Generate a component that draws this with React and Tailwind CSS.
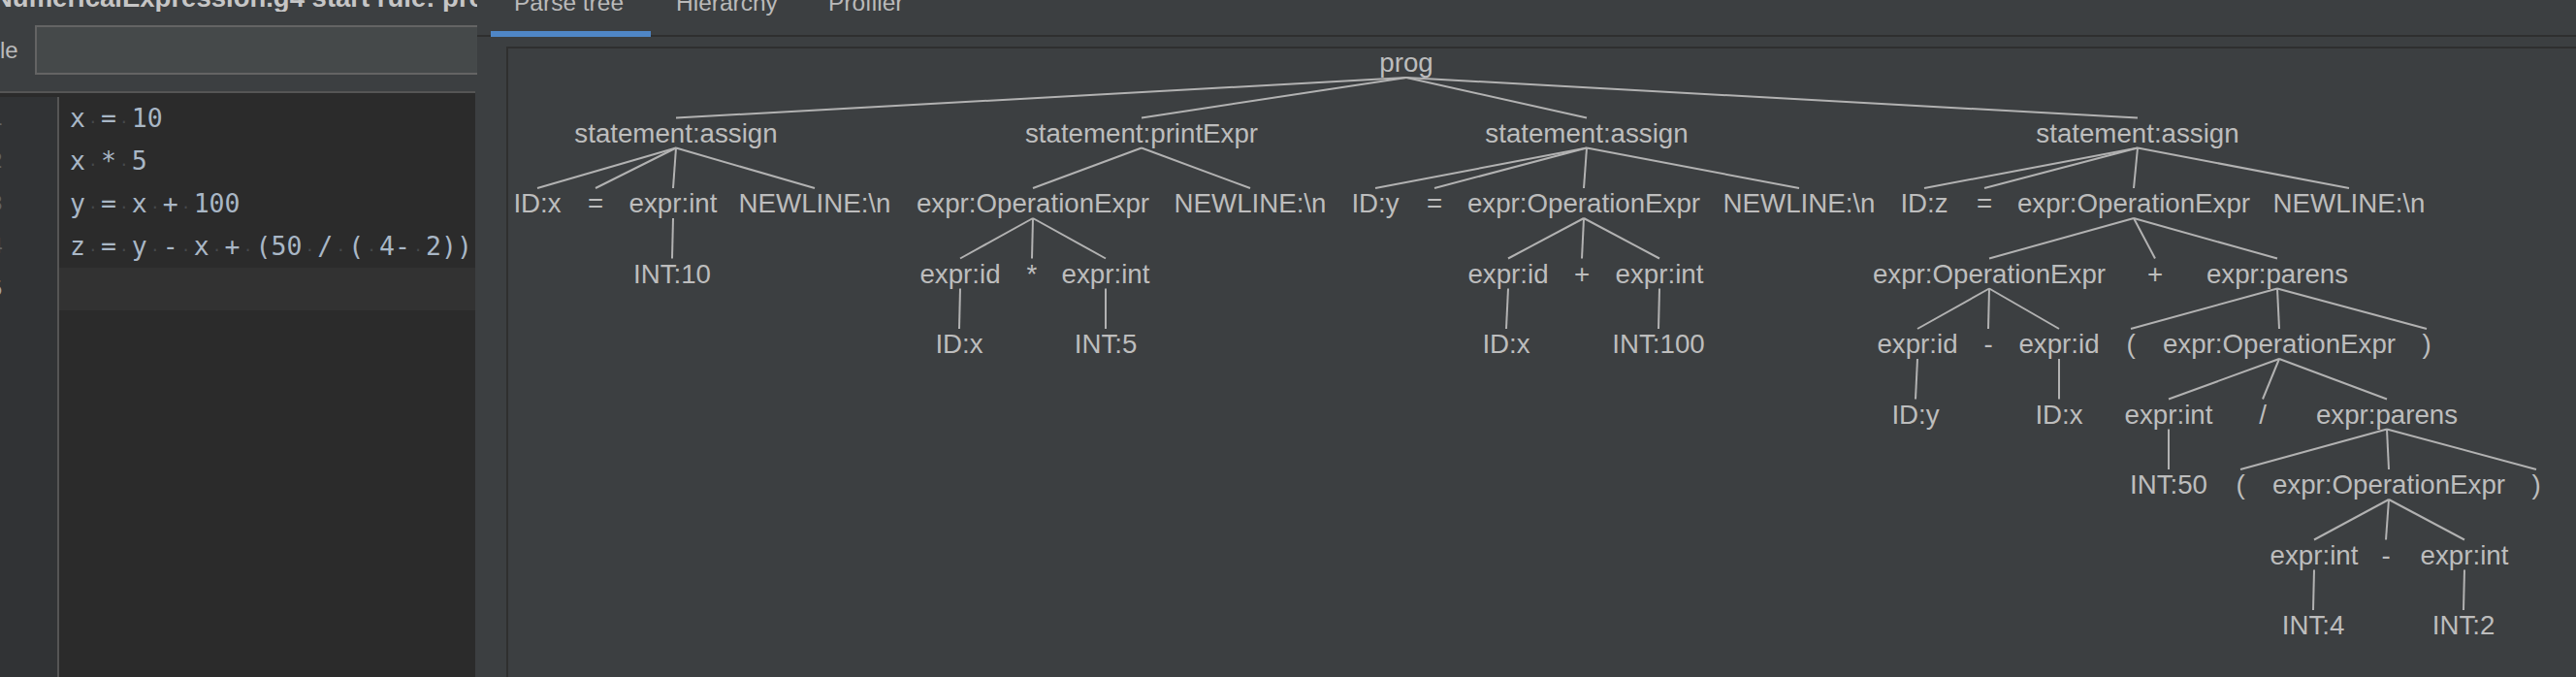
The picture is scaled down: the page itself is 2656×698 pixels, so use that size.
import React from 'react'

// parse tree, x = centre of each label in page pixels
const tree = {
  label: 'prog', x: 1450, children: [
    { label: 'statement:assign', x: 697, children: [
      { label: 'ID:x', x: 554 },
      { label: '=', x: 614 },
      { label: 'expr:int', x: 694, children: [{ label: 'INT:10', x: 693 }] },
      { label: 'NEWLINE:\\n', x: 840 },
    ] },
    { label: 'statement:printExpr', x: 1177, children: [
      { label: 'expr:OperationExpr', x: 1065, children: [
        { label: 'expr:id', x: 990, children: [{ label: 'ID:x', x: 989 }] },
        { label: '*', x: 1064 },
        { label: 'expr:int', x: 1140, children: [{ label: 'INT:5', x: 1140 }] },
      ] },
      { label: 'NEWLINE:\\n', x: 1289 },
    ] },
    { label: 'statement:assign', x: 1636, children: [
      { label: 'ID:y', x: 1418 },
      { label: '=', x: 1479 },
      { label: 'expr:OperationExpr', x: 1633, children: [
        { label: 'expr:id', x: 1555, children: [{ label: 'ID:x', x: 1553 }] },
        { label: '+', x: 1631 },
        { label: 'expr:int', x: 1711, children: [{ label: 'INT:100', x: 1710 }] },
      ] },
      { label: 'NEWLINE:\\n', x: 1855 },
    ] },
    { label: 'statement:assign', x: 2204, children: [
      { label: 'ID:z', x: 1984 },
      { label: '=', x: 2046 },
      { label: 'expr:OperationExpr', x: 2200, children: [
        { label: 'expr:OperationExpr', x: 2051, children: [
          { label: 'expr:id', x: 1977, children: [{ label: 'ID:y', x: 1975 }] },
          { label: '-', x: 2050 },
          { label: 'expr:id', x: 2123, children: [{ label: 'ID:x', x: 2123 }] },
        ] },
        { label: '+', x: 2222 },
        { label: 'expr:parens', x: 2348, children: [
          { label: '(', x: 2197 },
          { label: 'expr:OperationExpr', x: 2350, children: [
            { label: 'expr:int', x: 2236, children: [{ label: 'INT:50', x: 2236 }] },
            { label: '/', x: 2333 },
            { label: 'expr:parens', x: 2461, children: [
              { label: '(', x: 2310 },
              { label: 'expr:OperationExpr', x: 2463, children: [
                { label: 'expr:int', x: 2386, children: [{ label: 'INT:4', x: 2385 }] },
                { label: '-', x: 2460 },
                { label: 'expr:int', x: 2541, children: [{ label: 'INT:2', x: 2540 }] },
              ] },
              { label: ')', x: 2615 },
            ] },
          ] },
          { label: ')', x: 2502 },
        ] },
      ] },
      { label: 'NEWLINE:\\n', x: 2422 },
    ] },
  ],
}

const baseline = (depth) => 74 + 72.5 * depth

function collect(node, depth, labels, lines) {
  labels.push({ ...node, y: baseline(depth) })
  ;(node.children || []).forEach((child) => {
    lines.push({ x1: node.x, y1: baseline(depth) + 6, x2: child.x, y2: baseline(depth + 1) - 25 })
    collect(child, depth + 1, labels, lines)
  })
}

const code = ['x = 10', 'x * 5', 'y = x + 100', 'z = y - x + (50 / ( 4- 2))', '']

function CodeLine({ text }) {
  return (
    <>
      {text.split('').map((ch, i) =>
        ch === ' ' ? (
          <span key={i} className="inline-block w-[15.95px] text-center text-[16px] text-[#46494b]">·</span>
        ) : (
          <span key={i}>{ch}</span>
        )
      )}
    </>
  )
}

function ParseTree() {
  const labels = []
  const lines = []
  collect(tree, 0, labels, lines)
  return (
    <svg width={2132} height={648} className="block">
      <g transform="translate(-524 -50)">
        {lines.map((l, i) => (
          <line key={i} x1={l.x1} y1={l.y1} x2={l.x2} y2={l.y2} stroke="#b2b2b2" strokeWidth="2" />
        ))}
        {labels.map((n, i) => (
          <text
            key={i}
            x={n.x}
            y={n.y}
            textAnchor="middle"
            fill="#bdbdbd"
            style={{ fontFamily: '"Liberation Sans", Arial, sans-serif', fontSize: '27.7px' }}
          >
            {n.label}
          </text>
        ))}
      </g>
    </svg>
  )
}

export default function App() {
  const tabs = [
    { name: 'Parse tree', active: true, cls: 'pl-[24px] pr-[28px]' },
    { name: 'Hierarchy', active: false, cls: 'pl-[26px] pr-[26px]' },
    { name: 'Profiler', active: false, cls: 'pl-[26px] pr-[26px]' },
  ]

  return (
    <div className="w-[2656px] h-[698px] overflow-hidden bg-[#3c3f41] flex font-['Liberation_Sans',Arial,sans-serif]">
      {/* Left: grammar input + editor */}
      <div className="w-[492px] h-full shrink-0 flex flex-col overflow-hidden">
        <div className="h-[12px] overflow-hidden">
          <div className="-mt-[16px] -ml-[7px] whitespace-nowrap font-bold text-[27.5px] leading-[27px] text-[#c6c6c6]">
            NumericalExpression.g4 start rule: prog
          </div>
        </div>

        <div className="mt-[14px] h-[51px] flex items-center">
          <span className="w-[36px] shrink-0 text-[24px] leading-[24px] text-[#bbbbbb]">le</span>
          <div className="h-[51px] flex-1 -mr-[10px] bg-[#45494a] border-2 border-[#646464]"></div>
        </div>

        <div className="mt-[17px] h-[2px] mr-[2px] bg-[#555555]"></div>
        <div className="h-[4px] mr-[2px] bg-[#2b2b2b]"></div>

        <div className="flex-1 flex mr-[2px]">
          <div className="w-[61px] shrink-0 bg-[#313335] border-r-2 border-[#555555] overflow-hidden">
            <div className="-ml-[14px] w-[17px] text-right font-['DejaVu_Sans_Mono',monospace] text-[22px] leading-[44px] text-[#606366]">
              {code.map((_, i) => (
                <div key={i} className={i === 4 ? 'text-[#a4a3a3]' : ''}>{i + 1}</div>
              ))}
            </div>
          </div>
          <div className="flex-1 bg-[#2b2b2b] font-['DejaVu_Sans_Mono',monospace] text-[26.5px] leading-[44px] text-[#a9b7c6] whitespace-pre">
            {code.map((line, i) => (
              <div key={i} className={`h-[44px] pl-[11px] ${i === 4 ? 'bg-[#323232]' : ''}`}>
                <CodeLine text={line} />
              </div>
            ))}
          </div>
        </div>
      </div>

      {/* Right: tabs + parse tree */}
      <div className="flex-1 h-full flex flex-col min-w-0">
        <div className="h-[38px] shrink-0 border-b-2 border-[#2f2f2f] flex pl-[14px]">
          {tabs.map((t) => (
            <div key={t.name} className={`h-[38px] -mb-[2px] flex flex-col justify-between ${t.cls}`}>
              <span className="-mt-[9px] text-[24.5px] leading-[24px] text-[#bababa] whitespace-nowrap">{t.name}</span>
              {t.active && <div className="h-[6px] -mr-[28px] -ml-[24px] bg-[#4f86c6]"></div>}
            </div>
          ))}
        </div>

        <div className="mt-[10px] ml-[30px] flex-1 border-t-2 border-l-2 border-[#2f2f2f] overflow-hidden">
          <ParseTree />
        </div>
      </div>
    </div>
  )
}
